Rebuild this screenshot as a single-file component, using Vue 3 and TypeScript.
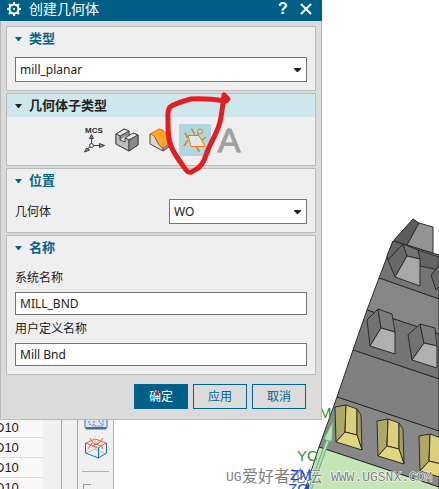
<script setup lang="ts">
import { ref } from 'vue'

interface Pocket {
  x: number
  y: number
}

const planType = ref('mill_planar')
const parent = ref('WO')
const systemName = ref('MILL_BND')
const userName = ref('Mill Bnd')
const selected = ref('boundary')

const tools: string[] = ['D10', 'D10', 'D10', 'D10']
const pockets: Pocket[] = [
  { x: 0, y: 0 },
  { x: 42, y: 14 },
  { x: 84, y: 29 },
]
</script>

<template>
  <main class="workspace">
    <svg class="viewport" viewBox="0 0 439 489" preserveAspectRatio="xMinYMin slice" aria-hidden="true">
      <g stroke="#2c2c2c" stroke-width="1" stroke-linejoin="round">
        <path d="M393 241 L403 244 L407 245 L439 255 V299 L379 278Z" fill="#757575" />
        <path d="M379 278 L439 299 V334 L367 310Z" fill="#868686" />
        <path d="M367 310 L439 334 V379 L353 350Z" fill="#757575" />
        <path d="M353 350 L439 379 V431 L337 397Z" fill="#808080" />
        <path d="M337 397 L439 431 V487 L319 447Z" fill="#888888" />
        <path d="M319 447 L439 487 V490 H305Z" fill="#c6e5b7" />

        <path d="M413 219 L419 223 L407 245 L403 244 L394 240Z" fill="#5d5d5d" />
        <path d="M419 223 L433 227 V253 L407 245Z" fill="#939393" />
        <path d="M393 241 L403 244 L388 260 L387 256Z" fill="#666" />
        <path d="M418 250 L439 257 V270 L420 266Z" fill="#646464" />
        <path d="M403 244 L407 256 L395 277 L388 260Z" fill="#686868" />
        <path d="M403 244 L418 250 L420 259 L407 256Z" fill="#747474" />
        <path d="M407 256 L420 259 V286 L395 277Z" fill="#a8a8a8" />
        <path d="M440 264 L431 275 L436 290 L440 286Z" fill="#686868" />

        <path d="M378 309 L381 328 L370 346 L367 320Z" fill="#727272" />
        <path d="M378 309 L392 314 L395 332 L381 328Z" fill="#7c7c7c" />
        <path d="M381 328 L395 332 V354 L370 346Z" fill="#b0b0b0" />
        <path d="M420 324 L424 343 L412 360 L408 335Z" fill="#727272" />
        <path d="M420 324 L435 328 L437 346 L424 343Z" fill="#7c7c7c" />
        <path d="M424 343 L437 346 V368 L412 360Z" fill="#b0b0b0" />

        <g v-for="p in pockets" :key="p.x" :transform="`translate(${p.x} ${p.y})`">
          <path d="M335 407 L346 405 L345 432 L336 442Z" fill="#afa765" />
          <path d="M346 405 L357 409 V435 L345 432Z" fill="#d9cf7c" />
          <path d="M357 409 L361 415 L362 450 L357 436Z" fill="#a49c61" />
          <path d="M345 432 L357 435 L362 450 L336 442Z" fill="#e0d680" />
        </g>
      </g>
      <path d="M328 440 L310 489" stroke="#69b084" stroke-width="4" />
      <path d="M328 440 L310 489" stroke="#b5e0bb" stroke-width="2" />
      <path d="M333 421 L324 439 Q328 442 332 441Z" fill="#b5e2b6" stroke="#63ad74" stroke-width="1" />
      <path d="M309 483 L304 489 H309Z" fill="#304c9c" />
      <g class="watermark">
        <text x="226" y="481">UG</text>
        <text x="242" y="482" class="watermark-han">爱好者论坛</text>
        <text x="331" y="481">WWW.UGSNX.COM</text>
      </g>
      <g class="axis">
        <text x="319" y="418" fill="#2c922c">M</text>
        <text x="297" y="461" fill="#2c922c">YC</text>
        <text x="290" y="480" fill="#1449e8">ZM</text>
        <text x="288" y="494" fill="#1449e8">ZC</text>
      </g>
    </svg>

    <form class="dialog" @submit.prevent>
      <header class="titlebar">
        <svg class="gear" width="16" height="16" viewBox="0 0 16 16" aria-hidden="true">
          <g stroke="#fff" fill="none">
            <circle cx="8" cy="8" r="4.5" stroke-width="2" />
            <path d="M8 1v3M8 12v3M1 8h3M12 8h3M3 3l2 2M11 11l2 2M13 3l-2 2M5 11l-2 2" stroke-width="2" />
          </g>
          <circle cx="8" cy="8" r="1" fill="#fff" />
        </svg>
        <h1>创建几何体</h1>
        <button type="button" class="title-button help" aria-label="帮助">?</button>
        <button type="button" class="title-button" aria-label="关闭">
          <svg width="12" height="12" viewBox="0 0 12 12"><path d="M1 1l10 10M11 1L1 11" stroke="#fff" stroke-width="2" /></svg>
        </button>
      </header>

      <div class="sections">
        <section class="group">
          <h2><svg class="caret" viewBox="0 0 7 4"><path d="M0 0h7L4 4H3z" /></svg><label for="plan-type">类型</label></h2>
          <div class="group-body">
            <div class="combo">
              <select id="plan-type" v-model="planType"><option>mill_planar</option></select>
              <svg class="combo-arrow" viewBox="0 0 7 4"><path d="M0 0h7v1L4 4H3L0 1z" /></svg>
            </div>
          </div>
        </section>

        <section class="group">
          <h2 class="active"><svg class="caret" viewBox="0 0 7 4"><path d="M0 0h7L4 4H3z" /></svg>几何体子类型</h2>
          <div class="subtypes">
            <button type="button" class="subtype" aria-label="MCS" @click="selected = 'mcs'">
              <svg width="32" height="32" viewBox="0 0 32 32">
                <text x="8" y="9" class="mcs">MCS</text>
                <g fill="none" stroke="#3c3c3c" stroke-width="1">
                  <path d="M14.500 14v5M17 21.500h5M13 23l-3 2" />
                  <path d="M12.500 14.500l2-4 2 4zM22.500 19.500l5 2-5 2zM9.500 24l-2 4 5-2z" fill="#999" />
                  <circle cx="14.500" cy="21.500" r="2" />
                </g>
              </svg>
            </button>
            <button type="button" class="subtype" aria-label="WORKPIECE" @click="selected = 'workpiece'">
              <svg width="32" height="32" viewBox="0 0 32 32" stroke="#484848" stroke-linejoin="round">
                <path d="M5 10L13 5l5 2v6l4-4 5 2v10l-9 6-13-7z" fill="#b5b5b5" />
                <path d="M9 12l9-5v7l-5 4-4-2z" fill="#8f8f8f" />
                <path d="M9 16l6-4 3 2-5 4z" fill="#e4e4e4" stroke="none" />
                <path d="M5 10L13 5l5 2-9 5z" fill="#e6e6e6" />
                <path d="M14 14l8-5 5 2-9 5z" fill="#e6e6e6" />
                <path d="M5 10l4 2v4l5 2v-4l4 2v11L5 20z" fill="#bdbdbd" />
                <path d="M18 16l9-5v10l-9 6z" fill="#8b8b8b" />
              </svg>
            </button>
            <button type="button" class="subtype" aria-label="MILL_AREA" @click="selected = 'area'">
              <svg width="32" height="32" viewBox="0 0 32 32" stroke-linejoin="round">
                <path d="M5 10c6 0 6 9 11 13l2 1v3L5 20z" fill="#d8d8d8" stroke="#484848" />
                <path d="M18 24l9-6v3l-9 6z" fill="#999" stroke="#484848" />
                <path d="M5 10l9-5c8 0 7 10 12 13l-8 6C11 21 13 11 5 10z" fill="#ffa42c" stroke="#df7900" />
              </svg>
            </button>
            <button type="button" class="subtype" :class="{ selected: selected === 'boundary' }" aria-label="MILL_BND" @click="selected = 'boundary'">
              <svg width="32" height="32" viewBox="0 0 32 32" fill="none" stroke="#ef7d08" stroke-width="1">
                <path d="M11 11.500h9l6 11H5z" fill="none" stroke="none" />
                <path d="M9 11.500h11l6 11H12z" fill="#e5e7e8" />
                <path d="M12.500 4.500l3 6M9 16l-4 6M6 9l3 5M17.500 23l3 5M23 16l4-3M18 11l2-2" stroke-width="1.500" />
                <circle cx="21" cy="7.500" r="2.500" />
              </svg>
            </button>
            <button type="button" class="subtype letter" aria-label="MILL_TEXT" @click="selected = 'text'">A</button>
          </div>
        </section>

        <section class="group">
          <h2><svg class="caret" viewBox="0 0 7 4"><path d="M0 0h7L4 4H3z" /></svg>位置</h2>
          <div class="group-body pair">
            <label for="parent">几何体</label>
            <div class="combo">
              <select id="parent" v-model="parent"><option>WO</option></select>
              <svg class="combo-arrow" viewBox="0 0 7 4"><path d="M0 0h7v1L4 4H3L0 1z" /></svg>
            </div>
          </div>
        </section>

        <section class="group">
          <h2><svg class="caret" viewBox="0 0 7 4"><path d="M0 0h7L4 4H3z" /></svg>名称</h2>
          <div class="group-body names">
            <label for="system-name">系统名称</label>
            <input id="system-name" v-model="systemName" type="text" />
            <label for="user-name">用户定义名称</label>
            <input id="user-name" v-model="userName" type="text" />
          </div>
        </section>
      </div>

      <footer class="actions">
        <button type="submit" class="primary">确定</button>
        <button type="button">应用</button>
        <button type="button">取消</button>
      </footer>

      <svg class="markup" width="322" height="420" viewBox="0 0 322 420" aria-hidden="true">
        <path d="M224 95 L228 99 L226 101 C212 99 201 98 191 99 C183 101 176 103 170 107 C167 111 168 116 168 121 C168 132 168 139 171 146 C174 154 181 163 186 170 C189 174 192 172 195 170 C201 167 204 162 206 155 C210 143 217 134 220 122 C222 113 223 104 224 95" />
        <circle cx="157" cy="393" r="1" />
      </svg>
    </form>

    <div class="underlay">
      <table class="tool-list">
        <tbody>
          <tr v-for="(tool, i) in tools" :key="i"><td><span>{{ tool }}</span></td></tr>
        </tbody>
      </table>
      <div class="gutter"></div>
      <div class="splitter"></div>
      <nav class="toolbar">
        <svg width="24" height="12" viewBox="0 0 24 12" aria-hidden="true">
          <path d="M1 0v9q0 2 2 2h18q2 0 2-2V0" fill="#dbe5f0" stroke="#3e6da0" stroke-width="1" />
          <path d="M2 10h20" stroke="#3e6da0" stroke-width="2" />
          <path d="M5 0v6l5 2h9V0M10 0v7M13 0l5 7" fill="none" stroke="#777" stroke-dasharray="2 1" />
        </svg>
        <svg width="24" height="24" viewBox="0 0 24 24" fill="none" aria-hidden="true">
          <path d="M11 4v10M2 17l9-4 11 5" stroke="#bbb" stroke-width="1" />
          <path d="M1.500 7v10l13 5 8-5V7M14.500 12v10" stroke="#176bc2" stroke-width="1" />
          <path d="M2 7l9-4 11 4-8 5zM6 2l3 5 8 3M19 2l-4 5-7 3M8 7L4 13M17 9l2 4" stroke="#f15b3a" stroke-width="1" />
        </svg>
        <hr />
        <span class="corner"></span>
      </nav>
    </div>
  </main>
</template>

<style>
body {
  margin: 0;
  background: #fff;
}
</style>

<style scoped>
* {
  box-sizing: border-box;
}

.workspace {
  position: relative;
  display: flex;
  flex-direction: column;
  height: 100vh;
  overflow: hidden;
  color: #222;
  font: 12px/16px "Noto Sans", "Noto Sans CJK SC", sans-serif;
}

.viewport {
  position: absolute;
  inset: 0;
  width: 100%;
  height: 100%;
}

.axis {
  font: 15px "Liberation Sans", sans-serif;
}

.watermark {
  fill: #808080;
  font: 13px "Liberation Mono", monospace;
  paint-order: stroke;
  stroke: #ffffff;
  stroke-width: 1px;
}

.watermark-han {
  font: 16px "Noto Sans CJK SC", sans-serif;
}

.dialog {
  position: relative;
  z-index: 1;
  flex: none;
  width: calc(100% - 117px);
  min-width: 300px;
  border: 1px solid #bababa;
  border-top: 0;
  background: #dbdbdb;
}

.titlebar {
  display: flex;
  align-items: center;
  height: 21px;
  margin: 0 -1px;
  padding: 0 8px 3px 6px;
  background: #005f87;
  color: #fff;
}

.titlebar h1 {
  flex: 1;
  margin: 0 0 0 7px;
  font-size: 14px;
  font-weight: 400;
  line-height: 18px;
}

.title-button {
  display: grid;
  place-items: center;
  width: 16px;
  height: 18px;
  margin-left: 7px;
  padding: 0;
  border: 0;
  background: none;
  color: #fff;
}

.help {
  font: bold 16px/18px "Liberation Sans", sans-serif;
}

.sections {
  display: flex;
  flex-direction: column;
  gap: 2px;
  padding: 5px 5px 0;
}

.group {
  border: 1px solid #bababa;
  border-radius: 1px;
  background: #efefef;
}

.group h2 {
  display: flex;
  align-items: center;
  gap: 7px;
  height: 23px;
  margin: 0;
  padding-left: 8px;
  color: #00658c;
  font-size: 13px;
  line-height: 23px;
}

.group h2.active {
  background: #cee7ec;
  color: #222;
}

.caret,
.combo-arrow {
  width: 7px;
  height: 4px;
  fill: currentColor;
}

.group-body {
  padding: 7px 8px 8px;
}

.pair {
  display: grid;
  grid-template-columns: 154px 1fr;
  align-items: center;
}

.names {
  display: flex;
  flex-direction: column;
  padding-top: 5px;
}

.names label {
  line-height: 28px;
}

.combo {
  display: grid;
  align-items: center;
}

.combo > * {
  grid-area: 1 / 1;
}

.combo-arrow {
  justify-self: end;
  margin-right: 6px;
  pointer-events: none;
}

select,
input {
  width: 100%;
  margin: 0;
  padding: 0 4px;
  border: 1px solid #737373;
  border-radius: 0;
  appearance: none;
  background: #fff;
  color: #222;
  font: inherit;
}

select {
  height: 25px;
}

input {
  height: 23px;
}

.subtypes {
  display: flex;
  justify-content: center;
  gap: 2px;
  padding: 7px 0 9px;
}

.subtype {
  width: 32px;
  height: 32px;
  padding: 0;
  border: 0;
  background: none;
}

.subtype svg {
  display: block;
}

.subtype.selected {
  background: #afd7e0;
}

.mcs {
  fill: #333;
  font: bold 8px "Liberation Sans", sans-serif;
}

.letter {
  color: #a0a0a0;
  font: 34px/32px "Liberation Sans", sans-serif;
  -webkit-text-stroke: 1px #a0a0a0;
}

.actions {
  display: flex;
  justify-content: flex-end;
  gap: 5px;
  padding: 9px 15px 10px;
}

.actions button {
  width: 54px;
  height: 25px;
  padding: 0;
  border: 1px solid #00658c;
  background: transparent;
  color: #00658c;
  font: inherit;
}

.actions .primary {
  background: #005f87;
  color: #fff;
}

.markup {
  position: absolute;
  top: 0;
  left: -1px;
  fill: none;
  stroke: #e51c20;
  stroke-width: 5px;
  stroke-linecap: round;
  stroke-linejoin: round;
  pointer-events: none;
}

.markup circle {
  fill: #e51c20;
  stroke-width: 2px;
}

.underlay {
  position: relative;
  display: flex;
  align-items: flex-start;
  align-self: flex-start;
  margin-top: -2px;
  background: #f0f0f0;
}

.tool-list {
  width: 43px;
  border-spacing: 0;
  background: #f8f8f8;
  font: 13px/19px "Liberation Sans", sans-serif;
}

.tool-list td {
  height: 20px;
  padding: 0;
  border-bottom: 1px solid #dedede;
}

.tool-list span {
  display: block;
  margin-left: -5px;
}

.gutter {
  align-self: stretch;
  width: 19px;
  border-right: 1px solid #a9a9a9;
}

.splitter {
  align-self: stretch;
  width: 16px;
  border-right: 1px solid #a9a9a9;
}

.toolbar {
  display: flex;
  flex-direction: column;
  align-items: center;
  align-self: stretch;
  width: 36px;
  border-right: 1px solid #b5b5b5;
}

.toolbar svg {
  flex: none;
  margin-bottom: 6px;
}

.toolbar hr {
  width: 27px;
  margin: 5px 0 12px;
  border: 0;
  border-top: 1px solid #b0b0b0;
}

.corner {
  align-self: flex-start;
  width: 8px;
  height: 8px;
  margin-left: 5px;
  border-top: 1px solid #999;
  border-left: 1px solid #999;
}
</style>
